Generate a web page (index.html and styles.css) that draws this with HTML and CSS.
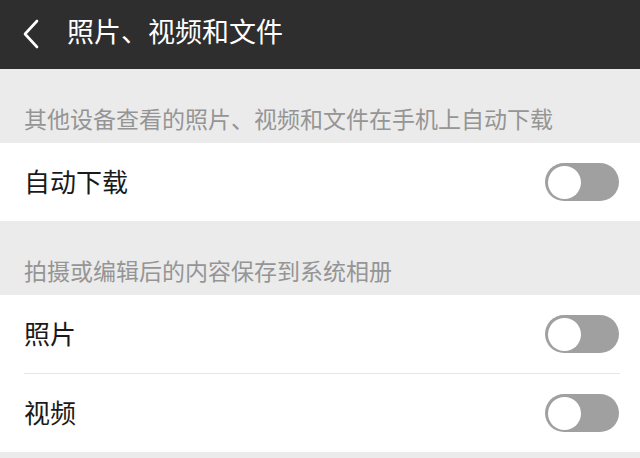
FILE: index.html
```html
<!DOCTYPE html>
<html lang="zh-CN">
<head>
<meta charset="utf-8">
<link rel="stylesheet" href="styles.css">
</head>
<body>
<div class="topbar">
  <svg class="back" width="18" height="30" viewBox="0 0 18 30"><path d="M15 2 L3 15 L15 28" fill="none" stroke="#ffffff" stroke-width="2.6" stroke-linecap="round" stroke-linejoin="round"/></svg>
  <span class="title">照片、视频和文件</span>
</div>
<div class="section-head">其他设备查看的照片、视频和文件在手机上自动下载</div>
<div class="group">
  <div class="row"><span class="label">自动下载</span><span class="toggle"><span class="knob"></span></span></div>
</div>
<div class="section-head">拍摄或编辑后的内容保存到系统相册</div>
<div class="group">
  <div class="row"><span class="label">照片</span><span class="toggle"><span class="knob"></span></span></div>
  <div class="divider"></div>
  <div class="row"><span class="label">视频</span><span class="toggle"><span class="knob"></span></span></div>
</div>
</body>
</html>
```
FILE: styles.css
```css
html, body {
  margin: 0;
  padding: 0;
  background: #ebebeb;
  font-family: "Noto Sans CJK SC", "Noto Sans", sans-serif;
}
.topbar {
  height: 69px;
  background: #2e2e2e;
  display: flex;
  align-items: center;
  padding-left: 22px;
  box-sizing: border-box;
}
.back {
  display: block;
  margin-top: -2px;
}
.title {
  color: #ffffff;
  font-size: 27px;
  margin-left: 27px;
  margin-top: -8px;
}
.section-head {
  height: 74px;
  box-sizing: border-box;
  padding: 34px 0 0 24px;
  color: #959595;
  font-size: 23px;
  line-height: 30px;
}
.group {
  background: #ffffff;
}
.row {
  height: 78px;
  display: flex;
  align-items: center;
  justify-content: space-between;
  padding: 0 21px 0 24px;
}
.label {
  font-size: 26px;
  color: #1a1a1a;
  margin-top: -3px;
}
.divider {
  height: 1px;
  background: #e6e6e6;
  margin: 0 20px 0 24px;
}
.toggle {
  width: 74px;
  height: 38px;
  border-radius: 19px;
  background: #a0a0a0;
  display: flex;
  align-items: center;
  padding-left: 3px;
  box-sizing: border-box;
}
.knob {
  width: 33px;
  height: 33px;
  border-radius: 50%;
  background: #ffffff;
}
```
